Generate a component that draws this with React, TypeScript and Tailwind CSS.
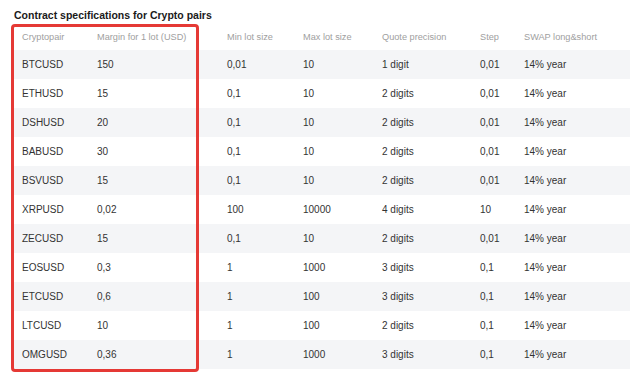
import React from "react";

const rows: string[][] = [
  ["BTCUSD", "150", "0,01", "10", "1 digit", "0,01", "14% year"],
  ["ETHUSD", "15", "0,1", "10", "2 digits", "0,01", "14% year"],
  ["DSHUSD", "20", "0,1", "10", "2 digits", "0,01", "14% year"],
  ["BABUSD", "30", "0,1", "10", "2 digits", "0,01", "14% year"],
  ["BSVUSD", "15", "0,1", "10", "2 digits", "0,01", "14% year"],
  ["XRPUSD", "0,02", "100", "10000", "4 digits", "10", "14% year"],
  ["ZECUSD", "15", "0,1", "10", "2 digits", "0,01", "14% year"],
  ["EOSUSD", "0,3", "1", "1000", "3 digits", "0,1", "14% year"],
  ["ETCUSD", "0,6", "1", "100", "3 digits", "0,1", "14% year"],
  ["LTCUSD", "10", "1", "100", "2 digits", "0,1", "14% year"],
  ["OMGUSD", "0,36", "1", "1000", "3 digits", "0,1", "14% year"],
];

const headers = [
  "Cryptopair",
  "Margin for 1 lot (USD)",
  "Min lot size",
  "Max lot size",
  "Quote precision",
  "Step",
  "SWAP long&short",
];

const cols = "grid grid-cols-[75px_130px_76px_79px_98px_44px_115px]";

export default function App() {
  return (
    <div
      className="w-[640px] h-[383px] bg-white relative overflow-hidden"
      style={{ fontFamily: '"Liberation Sans", Arial, sans-serif' }}
    >
      <div className="pl-[14px] pt-[9px]">
        <h1 className="text-[10.5px] leading-[12px] font-bold text-[#1a1a1a]">
          Contract specifications for Crypto pairs
        </h1>
      </div>
      <div className="ml-[13px] mt-[5px] w-[617px]">
        <div className={`${cols} h-[24px] items-center`}>
          {headers.map((h) => (
            <div key={h} className="pl-[9px] text-[9.2px] text-[#a0a0a0] whitespace-nowrap">
              {h}
            </div>
          ))}
        </div>
        {rows.map((r, i) => (
          <div
            key={r[0]}
            className={`${cols} h-[29px] items-center ${i % 2 === 0 ? "bg-[#f4f5f7]" : "bg-white"}`}
          >
            {r.map((c, j) => (
              <div key={j} className="pl-[9px] text-[10px] text-[#333333] whitespace-nowrap">
                {c}
              </div>
            ))}
          </div>
        ))}
      </div>
      <div className="absolute left-[11px] top-[24px] w-[188px] h-[348px] border-[3px] border-[#e53935] rounded-[4px] pointer-events-none" />
    </div>
  );
}
